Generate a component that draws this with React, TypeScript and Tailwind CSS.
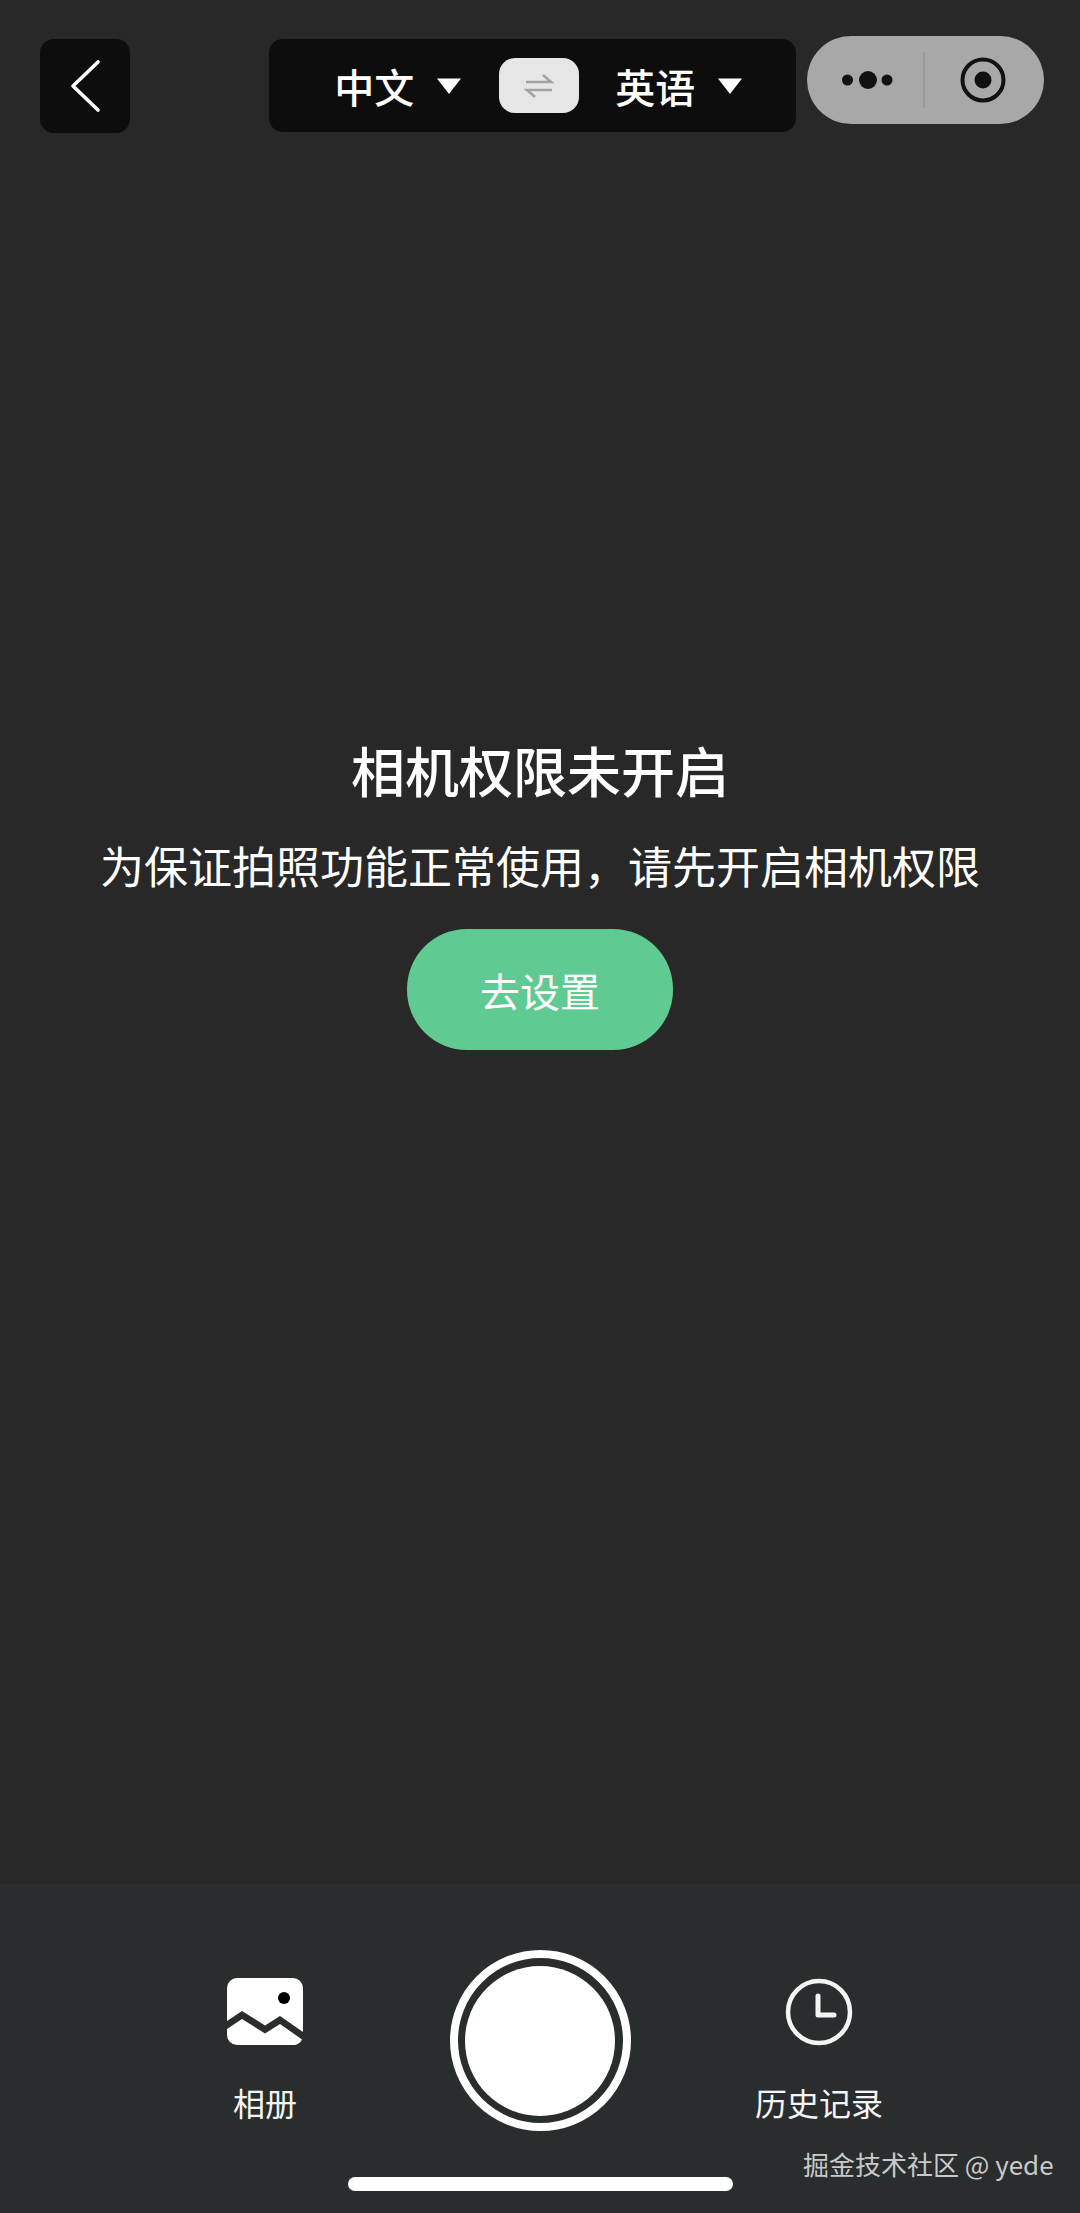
const sans = "font-['Noto_Sans_CJK_SC','Noto_Sans',sans-serif]";

function Caret() {
  return (
    <svg width="26" height="18" viewBox="0 0 26 18" className="block">
      <path d="M1 1.5h24L13 17z" fill="#fff" />
    </svg>
  );
}

function Swap() {
  return (
    <svg width="32" height="28" viewBox="0 0 32 28" fill="none" stroke="#a3a3a3" strokeWidth="2.6">
      <path d="M3 10h25L20 3" />
      <path d="M29 18H4l8 7" />
    </svg>
  );
}

export default function App() {
  return (
    <div className={`${sans} flex h-[2213px] w-[1080px] flex-col bg-[#282828] text-white`}>
      <header className="flex h-[160px] items-start pl-[40px] pr-[36px] pt-[36px]">
        <button className="mt-[3px] flex h-[94px] w-[91px] items-center justify-center rounded-[14px] bg-[#0d0d0d]">
          <svg width="32" height="54" viewBox="0 0 32 54" fill="none" stroke="#fff" strokeWidth="3.6" strokeLinecap="round" strokeLinejoin="round">
            <path d="M29 3 4 27l25 24" />
          </svg>
        </button>
        <div className="ml-[139px] mt-[3px] flex h-[93px] w-[532px] items-center rounded-[14px] bg-[#0d0d0d]">
          <div className="ml-[65px] flex w-[135px] items-center">
            <span className="text-[40px] font-medium leading-none">中文</span>
            <span className="ml-[22px]"><Caret /></span>
          </div>
          <div className="ml-[30px] flex h-[55px] w-[80px] items-center justify-center rounded-[16px] bg-[#e6e6e6]">
            <Swap />
          </div>
          <div className="ml-[36px] flex items-center">
            <span className="text-[40px] font-medium leading-none">英语</span>
            <span className="ml-[22px]"><Caret /></span>
          </div>
        </div>
        <div className="ml-[11px] flex h-[88px] w-[239px] items-center rounded-full bg-[#a8a8a8]">
          <svg width="58" height="24" viewBox="0 0 58 24" className="ml-[34px] block" fill="#111">
            <circle cx="6.500" cy="12" r="5.500" />
            <circle cx="27" cy="12" r="9" />
            <circle cx="46" cy="12" r="5.500" />
          </svg>
          <div className="ml-[24px] h-[56px] w-[2px] bg-[#9a9a9a]" />
          <svg width="48" height="48" viewBox="0 0 48 48" className="ml-[34px] block">
            <circle cx="24" cy="24" r="20.500" fill="none" stroke="#111" strokeWidth="4" />
            <circle cx="24" cy="24" r="8.500" fill="#111" />
          </svg>
        </div>
      </header>

      <main className="flex flex-1 flex-col items-center pt-[560px]">
        <h1 className="text-[54px] font-medium leading-[100px]">相机权限未开启</h1>
        <p className="mt-[5px] text-[44px] leading-[80px]">为保证拍照功能正常使用，请先开启相机权限</p>
        <button className="mt-[24px] flex h-[121px] w-[266px] items-center justify-center rounded-[60px] bg-[#5fca91] text-[40px] text-white">
          去设置
        </button>
      </main>

      <footer className="relative flex h-[329px] justify-center bg-[#2a2d2d]">
        <div className="absolute left-[180px] top-[94px] flex w-[170px] flex-col items-center">
          <svg width="76" height="68" viewBox="0 0 76 68">
            <path d="M10 0h56a10 10 0 0 1 10 10v44l-23-16-15 9.500L15 33 0 43V10A10 10 0 0 1 10 0z" fill="#fff" />
            <path d="M0 51 15 41l23 14.500L53 46l22 15.500A10 10 0 0 1 68 67H10A10 10 0 0 1 0 57z" fill="#fff" />
            <circle cx="57" cy="20" r="6" fill="#000" />
          </svg>
          <span className="mt-[36px] text-[32px] leading-[40px] text-[#f4f4f4]">相册</span>
        </div>
        <div className="mt-[66px] flex h-[181px] w-[181px] items-center justify-center rounded-full border-[8px] border-white">
          <div className="h-[150px] w-[150px] rounded-full bg-white" />
        </div>
        <div className="absolute left-[729px] top-[94px] flex w-[180px] flex-col items-center">
          <svg width="68" height="68" viewBox="0 0 68 68" fill="none" stroke="#f4f4f4" strokeWidth="4.500">
            <circle cx="34" cy="34" r="31" />
            <path d="M33 18v19h16" strokeWidth="5" strokeLinecap="round" strokeLinejoin="round" />
          </svg>
          <span className="mt-[36px] text-[32px] leading-[40px] text-[#f4f4f4]">历史记录</span>
        </div>
        <span className="absolute left-[803px] top-[262px] text-[26px] leading-[36px] text-[#c9c9c9]">掘金技术社区 @ yede</span>
        <div className="absolute bottom-[22px] left-[348px] h-[14px] w-[385px] rounded-full bg-white" />
      </footer>
    </div>
  );
}
